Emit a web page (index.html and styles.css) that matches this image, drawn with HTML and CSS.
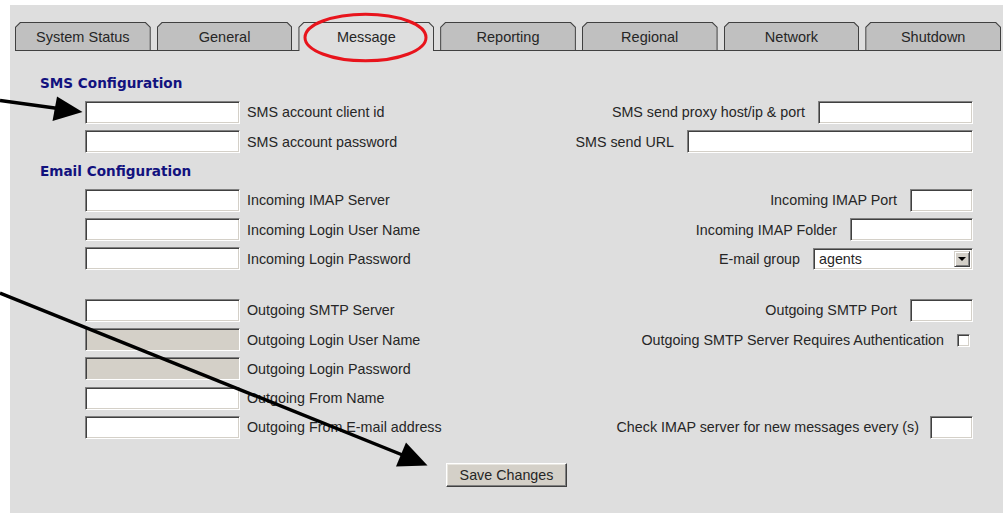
FILE: index.html
```html
<!DOCTYPE html>
<html lang="en">
<head>
<meta charset="utf-8">
<title>Message settings</title>
<link rel="stylesheet" href="styles.css">
</head>
<body>
<div class="panel">
  <div class="tabs">
    <div class="tab"><div class="tab-face">System Status</div></div>
    <div class="tab"><div class="tab-face">General</div></div>
    <div class="tab active"><div class="tab-face">Message</div></div>
    <div class="tab"><div class="tab-face">Reporting</div></div>
    <div class="tab"><div class="tab-face">Regional</div></div>
    <div class="tab"><div class="tab-face">Network</div></div>
    <div class="tab"><div class="tab-face">Shutdown</div></div>
  </div>

  <form class="form">
    <h3 class="section">SMS Configuration</h3>

    <div class="left"><input class="field" type="text"><label>SMS account client id</label></div>
    <div class="right"><label>SMS send proxy host/ip &amp; port</label><input class="field" type="text"></div>

    <div class="left"><input class="field" type="password"><label>SMS account password</label></div>
    <div class="right"><label>SMS send URL</label><input class="field wide" type="text"></div>

    <h3 class="section">Email Configuration</h3>

    <div class="left"><input class="field" type="text"><label>Incoming IMAP Server</label></div>
    <div class="right"><label>Incoming IMAP Port</label><input class="field port" type="text"></div>

    <div class="left"><input class="field" type="text"><label>Incoming Login User Name</label></div>
    <div class="right"><label>Incoming IMAP Folder</label><input class="field folder" type="text"></div>

    <div class="left"><input class="field" type="password"><label>Incoming Login Password</label></div>
    <div class="right"><label>E-mail group</label>
      <span class="select"><select><option>agents</option></select><span class="select-btn"></span></span>
    </div>

    <div class="spacer"></div>

    <div class="left"><input class="field" type="text"><label>Outgoing SMTP Server</label></div>
    <div class="right"><label>Outgoing SMTP Port</label><input class="field port" type="text"></div>

    <div class="left"><input class="field" type="text" disabled><label>Outgoing Login User Name</label></div>
    <div class="right"><label>Outgoing SMTP Server Requires Authentication</label><input class="check" type="checkbox"></div>

    <div class="left"><input class="field" type="password" disabled><label>Outgoing Login Password</label></div>
    <div class="right"></div>

    <div class="left"><input class="field" type="text"><label>Outgoing From Name</label></div>
    <div class="right"></div>

    <div class="left"><input class="field" type="text"><label>Outgoing From E-mail address</label></div>
    <div class="right tight"><label>Check IMAP server for new messages every (s)</label><input class="field secs" type="text"></div>
  </form>

  <div class="actions"><button class="btn" type="button">Save Changes</button></div>
</div>

<svg class="marks" width="1003" height="518" viewBox="0 0 1003 518" aria-hidden="true">
  <ellipse cx="365.5" cy="37.5" rx="60.5" ry="23.3" fill="none" stroke="#e8141c" stroke-width="3"/>
  <line x1="0" y1="100.5" x2="62" y2="109" stroke="#000" stroke-width="3.5"/>
  <polygon points="82.5,112 52.5,121 57,96.5" fill="#000"/>
  <line x1="0" y1="293" x2="405" y2="456" stroke="#000" stroke-width="3.5"/>
  <polygon points="427.5,465.5 396,466.5 406,442.5" fill="#000"/>
</svg>
</body>
</html>
```

FILE: styles.css
```css
html, body {
  margin: 0;
  padding: 0;
  background: #ffffff;
}

body {
  position: relative;
  width: 1003px;
  height: 518px;
  overflow: hidden;
  font-family: "Liberation Sans", Arial, sans-serif;
  font-size: 14.3px;
  color: #262626;
}

.panel {
  margin: 5px 0 0 10px;
  width: 993px;
  height: 508px;
  background: #dedede;
  padding-top: 17px;
  box-sizing: border-box;
}

/* ---- tab strip ---- */
.tabs {
  display: flex;
  align-items: flex-end;
  gap: 6px;
  height: 28px;
  margin: 0 2px 0 5px;
  border-bottom: 1px solid #404040;
}

.tab {
  flex: 1;
  height: 28px;
  padding: 1px 1px 0;
  box-sizing: border-box;
  background: #404040;
  clip-path: polygon(5px 0, calc(100% - 5px) 0, 100% 5px, 100% 100%, 0 100%, 0 5px);
}

.tab-face {
  height: 100%;
  background: #c0c0c0;
  clip-path: polygon(4.6px 0, calc(100% - 4.6px) 0, 100% 4.6px, 100% 100%, 0 100%, 0 4.6px);
  display: flex;
  align-items: center;
  justify-content: center;
  font-size: 14.5px;
  color: #262626;
  padding-top: 1px;
  box-sizing: border-box;
}

.tab.active {
  height: 29px;
  margin-bottom: -1px;
}

.tab.active .tab-face {
  background: #dedede;
  padding-bottom: 1px;
}

/* ---- form grid ---- */
.form {
  display: grid;
  grid-template-columns: 1fr auto;
  align-items: center;
  margin: 0;
  padding: 17.4px 30px 0 30px;
}

.section {
  grid-column: 1 / -1;
  margin: 0;
  height: 29.3px;
  line-height: 31px;
  font-family: "DejaVu Sans", Verdana, sans-serif;
  font-weight: bold;
  font-size: 13.6px;
  color: #12127e;
}

.left,
.right {
  height: 29.3px;
  display: flex;
  align-items: center;
}

.left {
  padding-left: 45px;
  gap: 7px;
}

.right {
  justify-content: flex-end;
  gap: 13px;
}

.right.tight {
  gap: 11px;
}

.spacer {
  grid-column: 1 / -1;
  height: 22.2px;
}

label {
  white-space: nowrap;
}

/* sunken text boxes */
.field {
  width: 155px;
  height: 23px;
  margin: 0;
  padding: 0 3px;
  box-sizing: border-box;
  background: #ffffff;
  border: 1px solid;
  border-color: #808080 #ffffff #ffffff #808080;
  box-shadow: inset 1px 1px 0 #404040, inset -1px -1px 0 #d4d0c8;
  font: 14px "Liberation Sans", Arial, sans-serif;
  outline: none;
}

.field:disabled {
  background: #d4d0c8;
}

.field.wide { width: 286px; }
.field.port { width: 63px; }
.field.folder { width: 123px; }
.field.secs { width: 43px; }

/* drop-down list */
.select {
  display: inline-flex;
  align-items: center;
  width: 160px;
  height: 22px;
  box-sizing: border-box;
  background: #ffffff;
  border: 1px solid;
  border-color: #808080 #ffffff #ffffff #808080;
  box-shadow: inset 1px 1px 0 #404040, inset -1px -1px 0 #d4d0c8;
  padding: 2px;
}

.select select {
  flex: 1;
  appearance: none;
  -webkit-appearance: none;
  border: none;
  background: transparent;
  font: 14.3px "Liberation Sans", Arial, sans-serif;
  color: #262626;
  padding: 0 0 0 3px;
  margin: 0;
  height: 18px;
  outline: none;
}

.select-btn {
  width: 16px;
  height: 16px;
  box-sizing: border-box;
  background: #d4d0c8;
  border: 1px solid;
  border-color: #d4d0c8 #404040 #404040 #d4d0c8;
  box-shadow: inset 1px 1px 0 #ffffff, inset -1px -1px 0 #808080;
  display: flex;
  align-items: center;
  justify-content: center;
}

.select-btn::before {
  content: "";
  width: 0;
  height: 0;
  border-left: 4px solid transparent;
  border-right: 4px solid transparent;
  border-top: 4px solid #000000;
  margin-top: 1px;
}

/* check box */
.check {
  appearance: none;
  -webkit-appearance: none;
  width: 13px;
  height: 13px;
  margin: 2px 3px 0 0;
  box-sizing: border-box;
  background: #ffffff;
  border: 1px solid;
  border-color: #808080 #ffffff #ffffff #808080;
  box-shadow: inset 1px 1px 0 #404040, inset -1px -1px 0 #d4d0c8;
}

/* action bar */
.actions {
  display: flex;
  justify-content: center;
  padding-top: 20.8px;
}

.btn {
  width: 121px;
  height: 24px;
  margin: 0;
  padding: 0;
  background: #d4d0c8;
  border: 1px solid;
  border-color: #ffffff #404040 #404040 #ffffff;
  box-shadow: inset -1px -1px 0 #808080, inset 1px 1px 0 #e8e6e0;
  font: 14.3px "Liberation Sans", Arial, sans-serif;
  color: #262626;
}

/* callout marks drawn over the form */
.marks {
  position: absolute;
  left: 0;
  top: 0;
  pointer-events: none;
}
```
